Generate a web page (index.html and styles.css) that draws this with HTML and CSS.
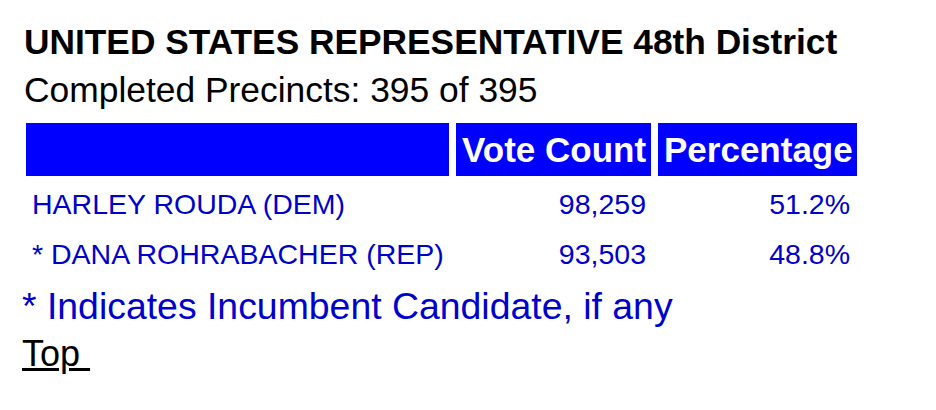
FILE: index.html
```html
<!DOCTYPE html>
<html>
<head>
<meta charset="utf-8">
<link rel="stylesheet" href="styles.css">
</head>
<body>
<div class="page">
  <h1 class="title">UNITED STATES REPRESENTATIVE 48th District</h1>
  <p class="precincts">Completed Precincts: 395 of 395</p>
  <table class="results">
    <thead>
      <tr>
        <th class="c-name"></th>
        <th class="c-votes">Vote Count</th>
        <th class="c-pct">Percentage</th>
      </tr>
    </thead>
    <tbody>
      <tr>
        <td class="c-name">HARLEY ROUDA (DEM)</td>
        <td class="c-votes num">98,259</td>
        <td class="c-pct num">51.2%</td>
      </tr>
      <tr>
        <td class="c-name">* DANA ROHRABACHER (REP)</td>
        <td class="c-votes num">93,503</td>
        <td class="c-pct num">48.8%</td>
      </tr>
    </tbody>
  </table>
  <p class="note">* Indicates Incumbent Candidate, if any</p>
  <a class="top" href="#">Top&nbsp;</a>
</div>
</body>
</html>
```

FILE: styles.css
```css
html, body {
  margin: 0;
  padding: 0;
  background: #ffffff;
}

.page {
  padding: 22px 0 0 22px;
  font-family: "Liberation Sans", Arial, sans-serif;
  color: #000;
}

.title {
  margin: 0 0 0 2px;
  font-size: 35.3px;
  font-weight: bold;
  line-height: 40px;
}

.precincts {
  margin: 8px 0 0 2px;
  font-size: 35.4px;
  line-height: 40px;
}

.results {
  margin: 6px 0 0 -3px;
  border-collapse: separate;
  border-spacing: 7px;
  table-layout: fixed;
  width: 845px;
}

.results th,
.results td {
  box-sizing: border-box;
  white-space: nowrap;
  overflow: visible;
}

.results th {
  background: #0000ff;
  color: #ffffff;
  font-size: 35px;
  font-weight: bold;
  height: 53px;
  line-height: 53px;
  padding: 0 6px;
  text-align: left;
}

.results td {
  color: #0000cc;
  font-size: 28.5px;
  height: 43px;
  line-height: 43px;
  padding: 0 6px;
}

.results th.c-name { width: 423px; }
.results th.c-votes { width: 195px; }
.results th.c-pct { width: 199px; }

.results td.num {
  text-align: right;
}

.results td.c-votes {
  padding-right: 5px;
}

.results td.c-pct {
  padding-right: 7px;
}

.note {
  margin: 2px 0 0 0;
  color: #0000cc;
  font-size: 37.4px;
  line-height: 42px;
}

.top {
  display: inline-block;
  margin-top: 6px;
  color: #000;
  font-size: 36px;
  line-height: 42px;
  text-decoration: underline;
}
```
